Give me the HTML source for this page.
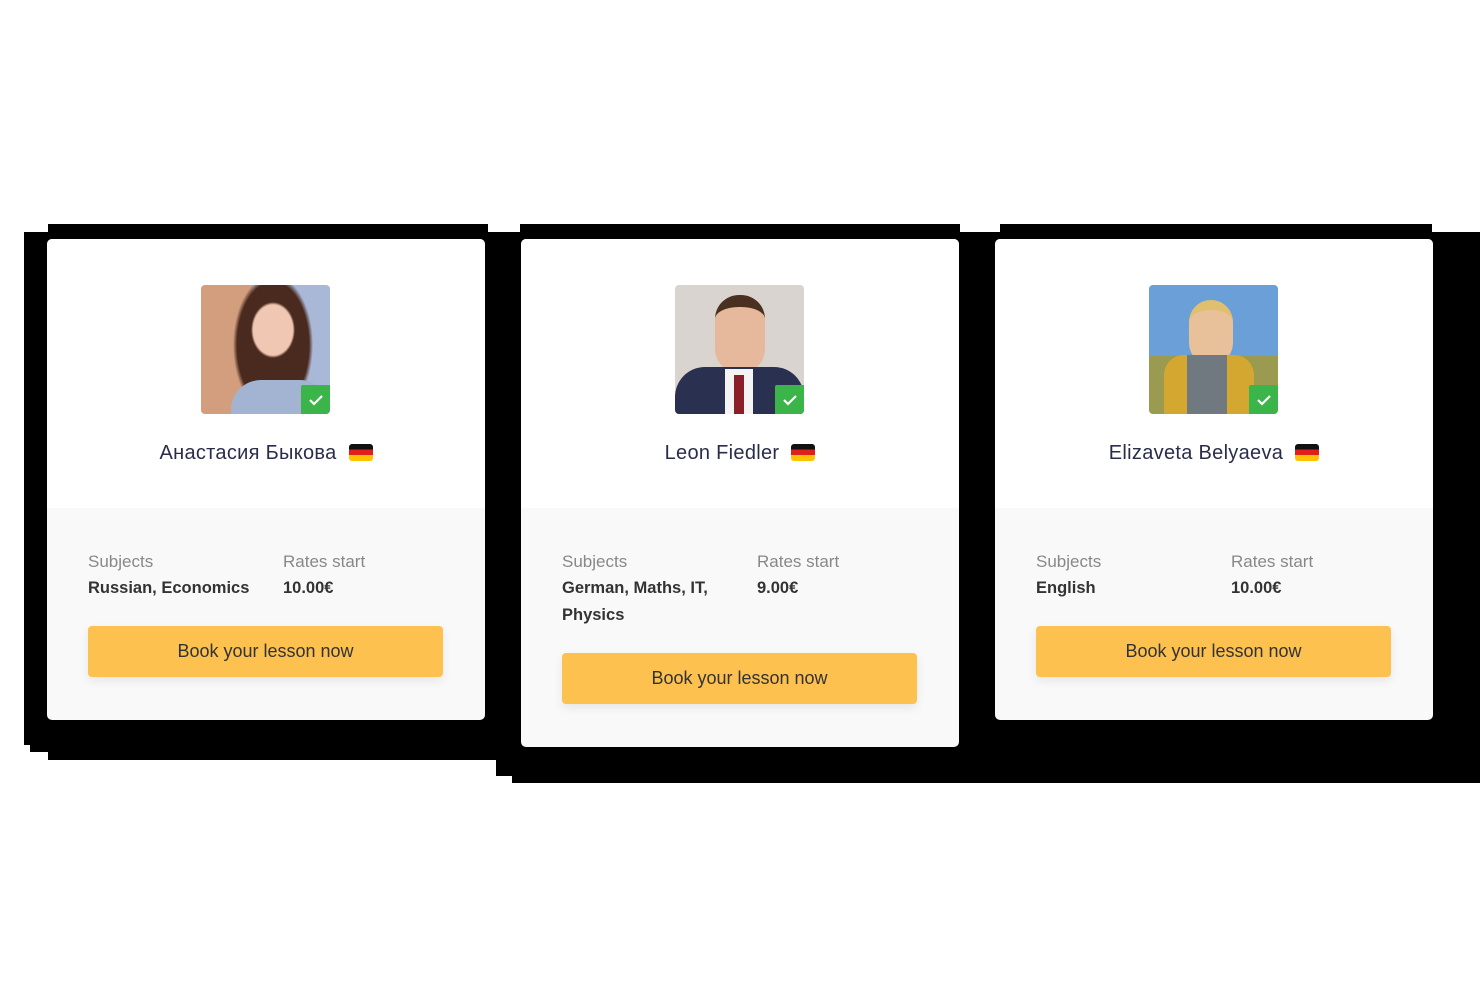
<!DOCTYPE html>
<html><head><meta charset="utf-8"><style>
body{margin:0;width:1480px;height:988px;background:#fff;position:relative;overflow:hidden;font-family:"Liberation Sans","Noto Sans CJK SC",sans-serif}
.b{position:absolute;background:#000}
.card{position:absolute;top:239px;width:438px;background:#f9f9f9;border-radius:5px;overflow:hidden}
.top{background:#fff;height:269px;position:relative}
.ph{position:absolute;left:154px;top:46px;width:129px;height:129px;border-radius:4px;overflow:hidden}
.ck{position:absolute;right:0;bottom:0;width:29px;height:29px;background:#3bb54a;border-radius:2px 0 4px 0}
.name{position:absolute;top:203px;left:0;right:0;text-align:center;font-size:20px;color:#2a2d4a;letter-spacing:.3px}
.flag{display:inline-block;width:24px;height:17px;border-radius:3px;vertical-align:-2px;margin-left:12px;background:linear-gradient(#111 0 33%,#e0201a 33% 66%,#fdc300 66%)}
.col{position:absolute;font-size:17px;line-height:27px}
.lab{color:#888}
.val{color:#333;font-weight:bold;font-size:16.5px}
.btn{position:absolute;left:41px;width:355px;height:51px;background:#fdc14f;border-radius:4px;text-align:center;line-height:51px;font-size:18px;color:#333;box-shadow:0 4px 10px rgba(0,0,0,.08)}
</style></head><body>
<div class="b" style="left:24px;top:232px;width:1456px;height:513px"></div>
<div class="b" style="left:48px;top:224px;width:440px;height:10px"></div>
<div class="b" style="left:520px;top:224px;width:440px;height:10px"></div>
<div class="b" style="left:1000px;top:224px;width:432px;height:10px"></div>
<div class="b" style="left:30px;top:740px;width:470px;height:12px"></div>
<div class="b" style="left:48px;top:740px;width:460px;height:20px"></div>
<div class="b" style="left:496px;top:740px;width:984px;height:36px"></div>
<div class="b" style="left:512px;top:740px;width:968px;height:43px"></div>

<div class="card" style="left:47px;height:481px">
<div class="top"><div class="ph" style="background:radial-gradient(ellipse 22px 28px at 72px 45px,#f0c7b2 90%,transparent 100%),radial-gradient(ellipse 40px 70px at 72px 60px,#4a2a1e 90%,transparent 100%),linear-gradient(90deg,transparent 40%,#a9b8d6 40%),#d39e7e"><div style="position:absolute;left:30px;top:95px;width:99px;height:40px;background:#a3b4d3;border-radius:30px 30px 0 0"></div><div class="ck"><svg width="29" height="29"><path d="M9 15l4 4 8-8" fill="none" stroke="#fff" stroke-width="2.2"/></svg></div></div>
<div class="name">Анастасия Быкова<span class="flag"></span></div></div>
<div class="col lab" style="left:41px;top:309px">Subjects<div class="val">Russian, Economics</div></div>
<div class="col lab" style="left:236px;top:309px">Rates start<div class="val">10.00€</div></div>
<div class="btn" style="top:387px">Book your lesson now</div>
</div>

<div class="card" style="left:521px;height:508px">
<div class="top"><div class="ph" style="background:#d9d4d0"><div style="position:absolute;left:40px;top:10px;width:50px;height:66px;border-radius:24px;background:#e6b89c;border-top:12px solid #4a3020"></div><div style="position:absolute;left:0;top:82px;width:129px;height:47px;background:#2a3050;border-radius:30px 30px 0 0"></div><div style="position:absolute;left:50px;top:84px;width:28px;height:45px;background:#f4f4f4"></div><div style="position:absolute;left:59px;top:90px;width:10px;height:39px;background:#8a1f2a"></div><div class="ck"><svg width="29" height="29"><path d="M9 15l4 4 8-8" fill="none" stroke="#fff" stroke-width="2.2"/></svg></div></div>
<div class="name">Leon Fiedler<span class="flag"></span></div></div>
<div class="col lab" style="left:41px;top:309px">Subjects<div class="val">German, Maths, IT,<br>Physics</div></div>
<div class="col lab" style="left:236px;top:309px">Rates start<div class="val">9.00€</div></div>
<div class="btn" style="top:414px">Book your lesson now</div>
</div>

<div class="card" style="left:995px;height:481px">
<div class="top"><div class="ph" style="background:linear-gradient(#6a9fd8 0 55%,#9a9a50 55%)"><div style="position:absolute;left:40px;top:15px;width:44px;height:55px;border-radius:22px;background:#e8c09a;border-top:10px solid #e0c070"></div><div style="position:absolute;left:15px;top:70px;width:90px;height:59px;background:#d4a830;border-radius:20px 20px 0 0"></div><div style="position:absolute;left:38px;top:70px;width:40px;height:59px;background:#707880"></div><div class="ck"><svg width="29" height="29"><path d="M9 15l4 4 8-8" fill="none" stroke="#fff" stroke-width="2.2"/></svg></div></div>
<div class="name">Elizaveta Belyaeva<span class="flag"></span></div></div>
<div class="col lab" style="left:41px;top:309px">Subjects<div class="val">English</div></div>
<div class="col lab" style="left:236px;top:309px">Rates start<div class="val">10.00€</div></div>
<div class="btn" style="top:387px">Book your lesson now</div>
</div>
</body></html>
